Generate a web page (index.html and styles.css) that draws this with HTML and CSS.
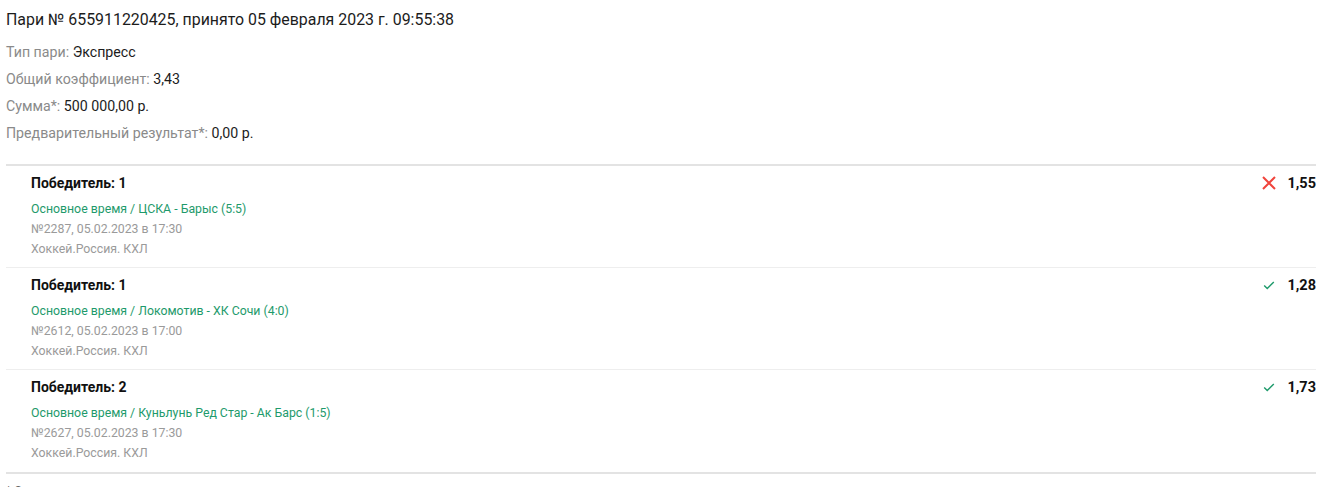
FILE: index.html
```html
<!DOCTYPE html>
<html lang="ru">
<head>
<meta charset="utf-8">
<link rel="stylesheet" href="styles.css">
</head>
<body>
<div class="page">
  <h1 class="title">Пари № 655911220425, принято 05 февраля 2023 г. 09:55:38</h1>
  <div class="info">
    <div class="row"><span class="lbl">Тип пари:</span> Экспресс</div>
    <div class="row"><span class="lbl">Общий коэффициент:</span> 3,43</div>
    <div class="row"><span class="lbl">Сумма*:</span> 500 000,00 р.</div>
    <div class="row"><span class="lbl">Предварительный результат*:</span> 0,00 р.</div>
  </div>
  <div class="events">
    <div class="event">
      <div class="ev-body">
        <div class="ev-title">Победитель: 1</div>
        <div class="ev-match">Основное время / ЦСКА - Барыс (5:5)</div>
        <div class="ev-meta">№2287, 05.02.2023 в 17:30</div>
        <div class="ev-meta">Хоккей.Россия. КХЛ</div>
      </div>
      <div class="ev-side">
        <svg class="ic-x" width="16" height="16" viewBox="0 0 16 16"><path d="M2 2L14 14M14 2L2 14" stroke="#f0443c" stroke-width="2" fill="none"/></svg>
        <span class="odd">1,55</span>
      </div>
    </div>
    <div class="event">
      <div class="ev-body">
        <div class="ev-title">Победитель: 1</div>
        <div class="ev-match">Основное время / Локомотив - ХК Сочи (4:0)</div>
        <div class="ev-meta">№2612, 05.02.2023 в 17:00</div>
        <div class="ev-meta">Хоккей.Россия. КХЛ</div>
      </div>
      <div class="ev-side">
        <svg class="ic-ok" width="16" height="16" viewBox="0 0 16 16"><path d="M2.5 8.5L6 12L13.5 4.5" stroke="#1e9a6b" stroke-width="1.6" fill="none"/></svg>
        <span class="odd">1,28</span>
      </div>
    </div>
    <div class="event">
      <div class="ev-body">
        <div class="ev-title">Победитель: 2</div>
        <div class="ev-match">Основное время / Куньлунь Ред Стар - Ак Барс (1:5)</div>
        <div class="ev-meta">№2627, 05.02.2023 в 17:30</div>
        <div class="ev-meta">Хоккей.Россия. КХЛ</div>
      </div>
      <div class="ev-side">
        <svg class="ic-ok" width="16" height="16" viewBox="0 0 16 16"><path d="M2.5 8.5L6 12L13.5 4.5" stroke="#1e9a6b" stroke-width="1.6" fill="none"/></svg>
        <span class="odd">1,73</span>
      </div>
    </div>
  </div>
  <div class="note">* Сумма и результат предварительные</div>
</div>
</body>
</html>
```

FILE: styles.css
```css
html, body {
  margin: 0;
  padding: 0;
  background: #fff;
}
body {
  font-family: Roboto, "Noto Sans", sans-serif;
  color: #1c1c1c;
}
.page {
  width: 1310px;
  padding: 10px 0 0 6px;
}
.title {
  margin: 0;
  font-size: 15.9px;
  font-weight: 400;
  line-height: 20px;
  color: #1c1c1c;
}
.info {
  margin-top: 9px;
  margin-bottom: 17px;
}
.row {
  font-size: 14.2px;
  line-height: 27px;
  color: #1c1c1c;
}
.lbl {
  color: #8a8a8a;
}
.events {
  border-top: 2px solid #e3e3e3;
  border-bottom: 2px solid #e3e3e3;
}
.event {
  display: flex;
  justify-content: space-between;
  padding: 7px 0 8px 25px;
  border-top: 1px solid #eeeeee;
}
.event:first-child {
  border-top: 0;
}
.event:last-child {
  padding-bottom: 9px;
}
.ev-title {
  font-size: 14px;
  font-weight: 700;
  line-height: 20px;
  color: #111;
  margin-bottom: 6px;
}
.ev-match {
  font-size: 12.3px;
  line-height: 20px;
  color: #1e9a6b;
}
.ev-meta {
  font-size: 12.3px;
  line-height: 20px;
  color: #9a9a9a;
}
.ev-side {
  display: flex;
  align-items: center;
  height: 20px;
  gap: 10px;
}
.ic-x {
  width: 16px;
  height: 16px;
}
.ic-ok {
  width: 14px;
  height: 14px;
  margin-right: 1px;
}
.odd {
  font-size: 14.5px;
  font-weight: 700;
  color: #111;
  min-width: 27px;
  text-align: right;
}
.note {
  font-size: 12px;
  line-height: 20px;
  margin-top: 7px;
  color: #666;
}
```
